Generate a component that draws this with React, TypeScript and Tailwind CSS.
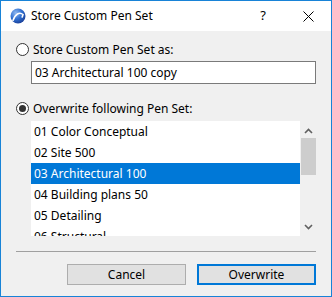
import React from "react";

const items = [
  "01 Color Conceptual",
  "02 Site 500",
  "03 Architectural 100",
  "04 Building plans 50",
  "05 Detailing",
  "06 Structural",
];

function AppIcon() {
  return (
    <svg width="16" height="16" viewBox="0 0 16 16">
      <defs>
        <radialGradient id="g" cx="35%" cy="30%" r="75%">
          <stop offset="0%" stopColor="#8fb8f0" />
          <stop offset="55%" stopColor="#2f6fd0" />
          <stop offset="100%" stopColor="#1a3f98" />
        </radialGradient>
      </defs>
      <circle cx="8" cy="8" r="7.5" fill="url(#g)" />
      <path d="M3 12.5 C5 6 9.5 3.5 13 6.5 L12.2 9" fill="none" stroke="#fff" strokeWidth="1.6" strokeLinecap="round" />
    </svg>
  );
}

function Radio({ checked, label }: { checked: boolean; label: string }) {
  return (
    <div className="flex h-[13px] items-center">
      <span className="flex h-[13px] w-[13px] items-center justify-center rounded-full border border-[#333] bg-white">
        {checked && <span className="h-[7px] w-[7px] rounded-full bg-[#333]" />}
      </span>
      <span className="ml-[4px] leading-none">{label}</span>
    </div>
  );
}

export default function App() {
  return (
    <div
      className="flex h-[297px] w-[332px] flex-col border border-[#1883d7] bg-[#f0f0f0] text-[12px] text-black"
      style={{ fontFamily: '"Noto Sans", "Open Sans", sans-serif' }}
    >
      <div className="flex h-[30px] items-center bg-white pl-[9px]">
        <AppIcon />
        <span className="ml-[5px] text-[12px]">Store Custom Pen Set</span>
        <span className="ml-auto mr-[37px] text-[13px]">?</span>
        <svg width="11" height="11" viewBox="0 0 11 11" className="mr-[17px]">
          <path d="M0.5 0.5 L10.5 10.5 M10.5 0.5 L0.5 10.5" stroke="#000" strokeWidth="1" />
        </svg>
      </div>

      <div className="flex flex-1 flex-col px-[15px]">
        <div className="mt-[12px]">
          <Radio checked={false} label="Store Custom Pen Set as:" />
        </div>
        <div className="ml-[15px] mt-[5px] flex h-[23px] items-center border border-[#7a7a7a] bg-white px-[3px]">
          03 Architectural 100 copy
        </div>

        <div className="mt-[18px]">
          <Radio checked={true} label="Overwrite following Pen Set:" />
        </div>

        <div className="ml-[15px] mt-[6px] flex h-[115px]">
          <div className="flex-1 overflow-hidden bg-white">
            {items.map((it, i) => (
              <div
                key={it}
                className={
                  "flex h-[21px] items-center px-[3px] " +
                  (i === 2 ? "bg-[#0078d7] text-white" : "")
                }
              >
                {it}
              </div>
            ))}
          </div>
          <div className="flex w-[16px] flex-col items-center bg-[#f0f0f0]">
            <svg width="9" height="6" viewBox="0 0 9 6" className="mt-[7px]">
              <path d="M1 5 L4.5 1.5 L8 5" fill="none" stroke="#606060" strokeWidth="1.6" />
            </svg>
            <div className="mt-[4px] h-[37px] w-[15px] bg-[#cdcdcd]" />
            <svg width="9" height="6" viewBox="0 0 9 6" className="mt-auto mb-[6px]">
              <path d="M1 1 L4.5 4.5 L8 1" fill="none" stroke="#606060" strokeWidth="1.6" />
            </svg>
          </div>
        </div>

        <div className="mt-[15px] h-px bg-[#a0a0a0]" />

        <div className="mt-[12px] flex justify-end gap-[11px]">
          <button className="h-[21px] w-[119px] border border-[#adadad] bg-[#e1e1e1]">Cancel</button>
          <button className="h-[21px] w-[119px] border-2 border-[#0078d7] bg-[#e1e1e1]">Overwrite</button>
        </div>
      </div>
    </div>
  );
}
